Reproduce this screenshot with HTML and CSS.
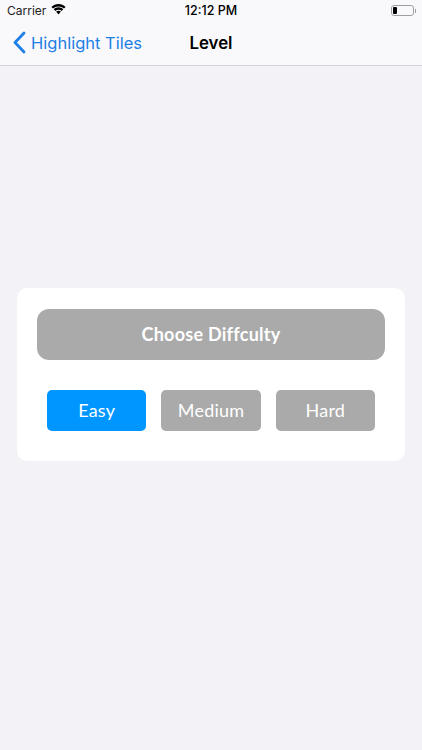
FILE: index.html
```html
<!DOCTYPE html>
<html lang="en">
<head>
  <meta charset="UTF-8">
  <meta name="viewport" content="width=device-width, initial-scale=1.0">
  <title>Level</title>
  <link rel="stylesheet" href="styles.css">
</head>
<body>
  <!-- Status bar -->
  <div class="status-bar">
    <div class="status-left">
      <span>Carrier</span>
      <svg class="wifi" width="15" height="11" viewBox="0 0 15 11">
        <path d="M7.500 2.400c2.100 0 4 .8 5.500 2.200l1.600-1.700C12.700 1.100 10.200 0 7.500 0S2.300 1.100.4 2.900L2 4.600c1.500-1.400 3.400-2.200 5.500-2.200z" fill="#000"/>
        <path d="M7.500 5.700c1.200 0 2.300.4 3.200 1.200l1.500-1.700C10.900 4 9.300 3.300 7.500 3.300S4.100 4 2.800 5.200l1.500 1.700c.9-.8 2-1.200 3.200-1.200z" fill="#000"/>
        <path d="M7.500 6.700c-.9 0-1.700.3-2.400.9l2.400 2.900 2.400-2.900c-.7-.6-1.500-.9-2.400-.9z" fill="#000"/>
      </svg>
    </div>
    <span class="status-time">12:12 PM</span>
    <div class="battery">
      <div class="battery-body"><div class="battery-level"></div></div>
      <div class="battery-cap"></div>
    </div>
  </div>

  <!-- Nav bar -->
  <div class="nav-bar">
    <div class="nav-back">
      <svg width="14" height="23" viewBox="0 0 14 23">
        <path d="M12 2 L3 11.500 L12 21" fill="none" stroke="#1e7fe6" stroke-width="2.800" stroke-linecap="round" stroke-linejoin="round"/>
      </svg>
      <span>Highlight Tiles</span>
    </div>
    <div class="nav-title">Level</div>
  </div>

  <!-- Difficulty card -->
  <div class="content">
    <div class="card">
      <div class="card-heading"><span>Choose Diffculty</span></div>
      <div class="levels">
        <button class="level active">Easy</button>
        <button class="level">Medium</button>
        <button class="level">Hard</button>
      </div>
    </div>
  </div>
</body>
</html>
```
FILE: styles.css
```css
* {
  box-sizing: border-box;
}

body {
  margin: 0;
  padding: 0;
  width: 422px;
  height: 750px;
  overflow: hidden;
  display: flex;
  flex-direction: column;
  background-color: #f2f2f7;
  font-family: 'Inter', 'Liberation Sans', sans-serif;
  color: #000;
}

.status-bar {
  height: 21px;
  flex-shrink: 0;
  display: flex;
  align-items: center;
  justify-content: space-between;
  padding: 0 6px 0 7px;
  position: relative;
  background-color: #f9f9fb;
  font-size: 12px;
}

.status-left {
  display: flex;
  align-items: center;
  gap: 5px;
  color: #222;
}

.wifi {
  margin-top: -3px;
}

.status-time {
  position: absolute;
  left: 0;
  right: 0;
  text-align: center;
  font-size: 12.500px;
  font-weight: 500;
}

.battery {
  display: flex;
  align-items: center;
  gap: 1px;
}

.battery-body {
  width: 23px;
  height: 11px;
  border: 1px solid #a0a0a4;
  border-radius: 3px;
  padding: 1px;
}

.battery-level {
  width: 4px;
  height: 100%;
  background-color: #000;
  border-radius: 1px;
}

.battery-cap {
  width: 1px;
  height: 4px;
  background-color: #a0a0a4;
}

.nav-bar {
  height: 45px;
  flex-shrink: 0;
  position: relative;
  display: flex;
  align-items: center;
  justify-content: center;
  background-color: #f9f9fb;
  border-bottom: 1px solid #d5d5d8;
}

.nav-back {
  position: absolute;
  left: 12px;
  top: 10px;
  display: flex;
  align-items: center;
  gap: 5px;
  font-size: 16.500px;
  color: #1e7fe6;
}

.nav-title {
  font-size: 16.800px;
  font-weight: 600;
}

.content {
  flex: 1;
  padding: 222px 17px 0;
}

.card {
  height: 173px;
  background-color: #fff;
  border-radius: 10px;
  padding: 21px 20px 0;
}

.card-heading {
  height: 51px;
  display: flex;
  align-items: center;
  justify-content: center;
  background-color: #aaa;
  border-radius: 12px;
  color: #fff;
  font-family: 'Lato', sans-serif;
  font-size: 18px;
  font-weight: 700;
  letter-spacing: 0.25px;
}

.card-heading span {
  margin-top: -2px;
}

.levels {
  display: flex;
  gap: 15px;
  margin-top: 30px;
  padding: 0 10px;
}

.level {
  flex: 1;
  height: 41px;
  border: none;
  border-radius: 5px;
  padding: 0 0 2px;
  background-color: #aaa;
  color: #fff;
  font-family: 'Lato', sans-serif;
  font-size: 18px;
  letter-spacing: 0.2px;
  cursor: pointer;
}

.level.active {
  background-color: #0096ff;
}
```
